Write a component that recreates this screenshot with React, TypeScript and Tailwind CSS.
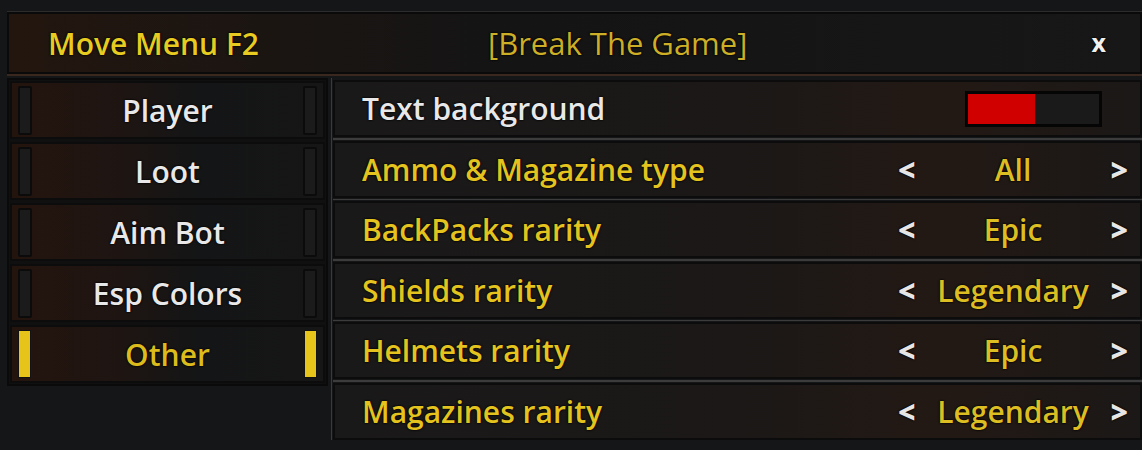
import React from 'react';

const TABS = [
  { label: 'Player', active: false },
  { label: 'Loot', active: false },
  { label: 'Aim Bot', active: false },
  { label: 'Esp Colors', active: false },
  { label: 'Other', active: true },
];

const ROWS = [
  { label: 'Ammo & Magazine type', value: 'All' },
  { label: 'BackPacks rarity', value: 'Epic' },
  { label: 'Shields rarity', value: 'Legendary' },
  { label: 'Helmets rarity', value: 'Epic' },
  { label: 'Magazines rarity', value: 'Legendary' },
];

const font = "font-['Open_Sans',sans-serif]";
const shadow = '[text-shadow:0_0_2px_#000,0_0_2px_#000]';

function SideBar({ active }: { active: boolean }) {
  return active ? (
    <div className="h-[48px] w-[13px] border border-[#111] bg-[#e6c419]" />
  ) : (
    <div className="h-[49px] w-[14px] rounded-[2px] border-2 border-[#0b0b0b] bg-[#1b1b1b]" />
  );
}

function Tab({ label, active }: { label: string; active: boolean }) {
  return (
    <div className="flex h-[58px] items-center justify-between border-2 border-[#0c0c0c] bg-[linear-gradient(90deg,#24140e_0%,#1e1512_35%,#141516_60%,#161616_100%)] px-[6px]">
      <SideBar active={active} />
      <span
        className={`${font} ${shadow} text-[30px] font-semibold ${active ? 'text-[#dcbc1c]' : 'text-[#e8e8e8]'}`}
      >
        {label}
      </span>
      <SideBar active={active} />
    </div>
  );
}

function Row({ label, white, children }: { label: string; white?: boolean; children: React.ReactNode }) {
  return (
    <div className="flex h-[57px] items-center justify-between border-2 border-[#0c0c0c] bg-[linear-gradient(90deg,#1a1919_0%,#1b1817_50%,#231914_75%,#1b1817_100%)] pl-[27px] pr-[12px]">
      <span className={`${font} ${shadow} text-[30px] font-semibold ${white ? 'text-[#e8e8e8]' : 'text-[#e4c31e]'}`}>
        {label}
      </span>
      {children}
    </div>
  );
}

function Selector({ value }: { value: string }) {
  return (
    <div className={`${font} ${shadow} flex w-[230px] items-center justify-between text-[30px] font-semibold`}>
      <span className="font-extrabold text-[#e6e6e6]">&lt;</span>
      <span className="text-[#dcbd22]">{value}</span>
      <span className="font-extrabold text-[#e6e6e6]">&gt;</span>
    </div>
  );
}

export default function App() {
  return (
    <div className="h-[450px] w-[1142px] overflow-hidden bg-[#151617] pt-[11px]">
      <div className="ml-[7px] border-t border-[#2c2c2c]">
        <div className="flex h-[62px] items-center border-2 border-[#0a0a0a] bg-[linear-gradient(90deg,#23160f_0%,#1a1512_25%,#141415_45%,#171717_100%)]">
          <span className={`${font} ${shadow} ml-[39px] w-[220px] text-[30px] font-semibold text-[#e8cb20]`}>
            Move Menu F2
          </span>
          <span className={`${font} ${shadow} ml-[220px] text-[31px] font-medium text-[#cdae27]`}>
            [Break The Game]
          </span>
          <span className={`${font} ${shadow} ml-auto mr-[34px] text-[25px] font-bold text-[#f0f0f0]`}>x</span>
        </div>
      </div>
      <div className="ml-[7px] h-[2px] bg-[#3a271d]" />
      <div className="mt-[2px] flex items-start">
        <div className="ml-[7px] w-[321px] border-2 border-[#0a0a0a] bg-[#101010] p-[1px]">
          <div className="flex flex-col gap-[3px]">
            {TABS.map((t) => (
              <Tab key={t.label} label={t.label} active={t.active} />
            ))}
          </div>
        </div>
        <div className="ml-[3px] flex flex-1 flex-col border-l border-[#3a3a3a] pl-[1px]">
          <div className="h-[2px]" />
          <Row label="Text background" white>
            <div className="mr-[26px] flex h-[36px] w-[137px] border-[3px] border-[#050505] bg-[#1a1a1a]">
              <div className="h-full w-[67px] bg-[#d00000]" />
            </div>
          </Row>
          {ROWS.map((r) => (
            <React.Fragment key={r.label}>
              <div className="my-[1px] h-[1.6px] bg-[#3c3c3c]" />
              <Row label={r.label}>
                <Selector value={r.value} />
              </Row>
            </React.Fragment>
          ))}
        </div>
      </div>
    </div>
  );
}
